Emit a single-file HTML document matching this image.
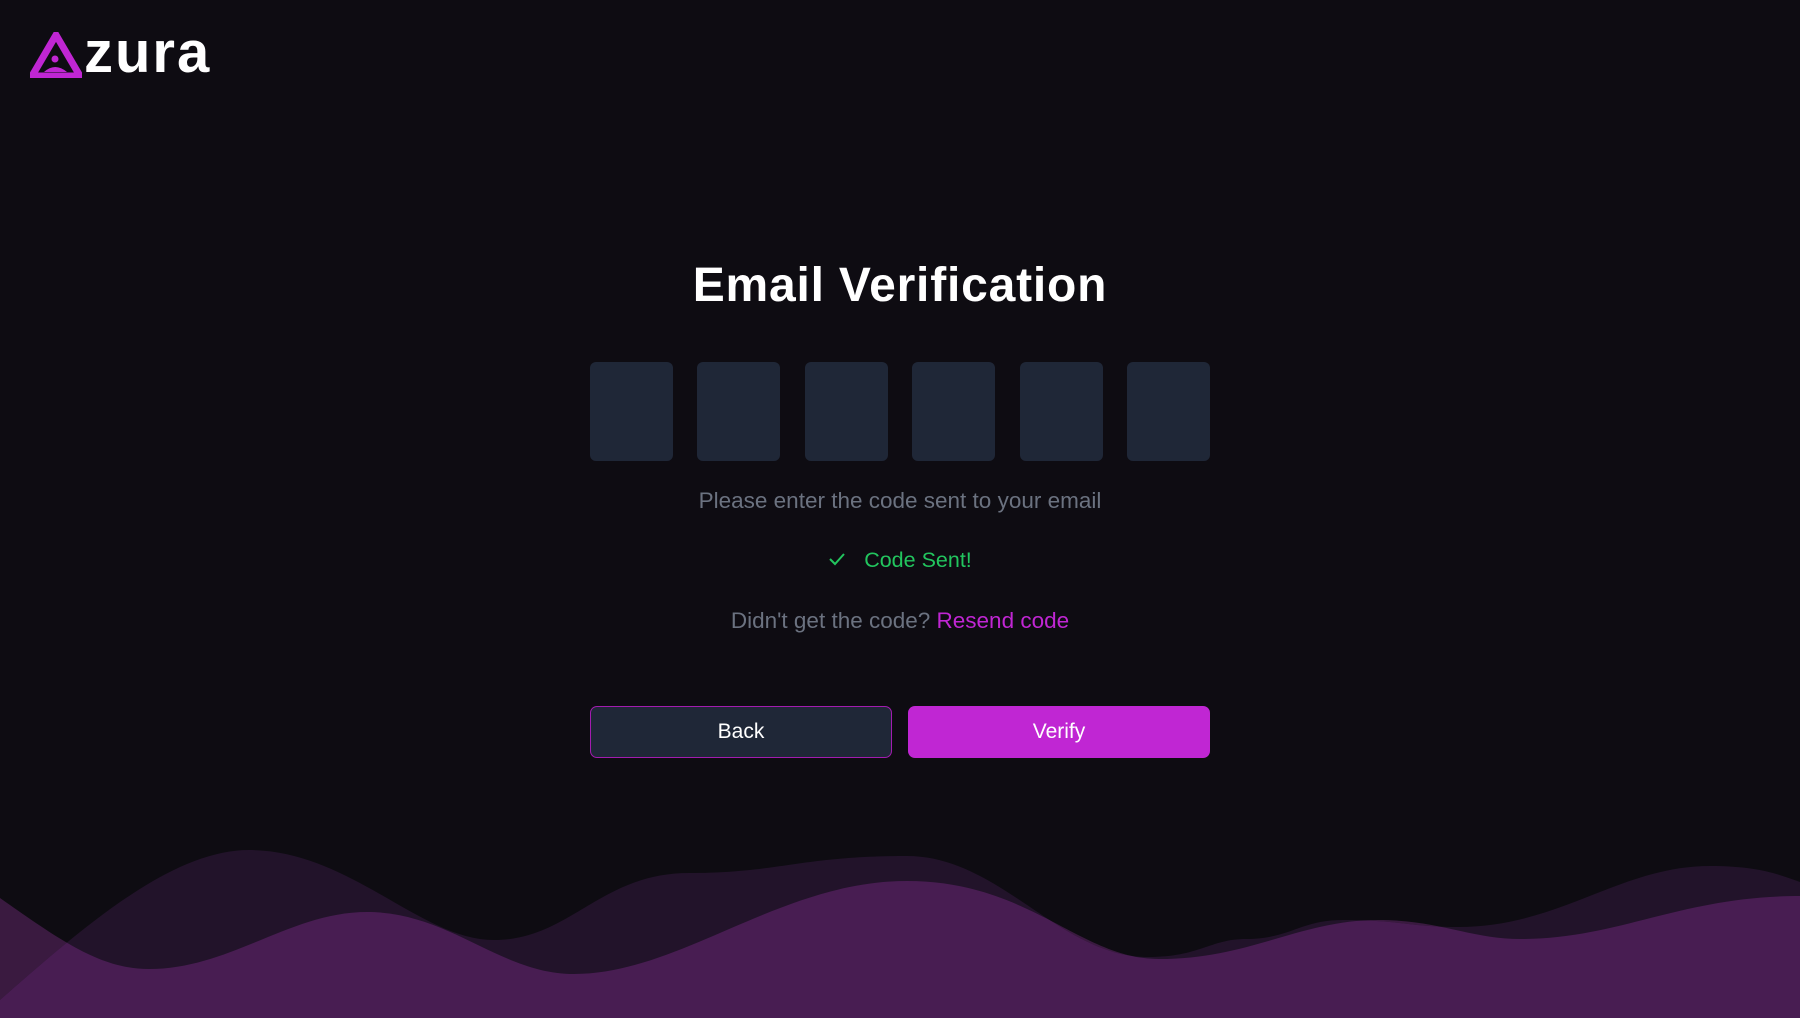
<!DOCTYPE html>
<html><head><meta charset="utf-8"><style>
*{margin:0;padding:0;box-sizing:border-box}
body{width:1800px;height:1018px;background:#0e0c12;position:relative;overflow:hidden;font-family:"Liberation Sans",sans-serif}
.logo{position:absolute;left:30px;top:28px;display:flex;align-items:flex-end}
.logo span{font-size:58px;font-weight:bold;color:#fff;letter-spacing:2px;line-height:50px;margin-left:2px}
h1{position:absolute;top:258px;left:0;width:1800px;text-align:center;color:#fff;font-size:48px;font-weight:bold;letter-spacing:0.8px}
.boxes{position:absolute;left:590px;top:362px;display:flex;gap:24.4px}
.boxes div{width:83px;height:99px;background:#1f2737;border-radius:6px}
.t{position:absolute;left:0;width:1800px;text-align:center;font-size:22.5px;color:#6b7280}
.btn{position:absolute;top:706px;height:52px;width:302px;border-radius:7px;color:#fff;font-size:21px;display:flex;align-items:center;justify-content:center}
svg.w{position:absolute;left:0;top:0}
</style></head><body>
<div class="logo">
<svg width="52" height="46" viewBox="0 0 52 46"><path d="M26 3 L50 44 L2 44 Z" fill="none" stroke="#c026d3" stroke-width="7" stroke-linejoin="miter"/><circle cx="25" cy="27" r="3.5" fill="#c026d3"/><path d="M14 40 Q25 30 37 40 Z" fill="#c026d3"/></svg>
<span>zura</span></div>
<h1>Email Verification</h1>
<div class="boxes"><div></div><div></div><div></div><div></div><div></div><div></div></div>
<div class="t" style="top:488px">Please enter the code sent to your email</div>
<div class="t" style="top:548px;color:#22c55e;font-size:21.5px"><svg width="18" height="14" viewBox="0 0 18 14" style="margin-right:18px;vertical-align:1px"><path d="M2 7 L7 12 L16 2" fill="none" stroke="#22c55e" stroke-width="2"/></svg>Code Sent!</div>
<div class="t" style="top:608px">Didn't get the code? <span style="color:#c026d3">Resend code</span></div>
<div class="btn" style="left:590px;background:#1f2737;border:1.5px solid #a21caf">Back</div>
<div class="btn" style="left:908px;background:#c026d3">Verify</div>
<svg class="w" width="1800" height="1018">
<defs>
<clipPath id="bk"><path id="bp" d="M0,1000 C80,930 170,850 249,850 C350,850 420,940 494,940 C570,940 600,873 689,873 C780,873 800,856 907,856 C1000,856 1060,957 1148,957 C1200,957 1210,939 1246,939 C1290,939 1300,920 1343,920 C1400,920 1410,927 1458,927 C1560,927 1620,866 1710,866 C1760,866 1780,875 1800,882 L1800,1018 L0,1018Z"/></clipPath>
</defs>
<path d="M0,898 C60,940 100,969 149,969 C230,969 290,912 367,912 C450,912 500,974 574,974 C680,974 780,881 907,881 C1030,881 1080,959 1159,959 C1250,959 1300,920 1378,920 C1440,920 1470,939 1521,939 C1620,939 1680,896 1800,896 L1800,1018 L0,1018Z" fill="#3a1a40"/>
<use href="#bp" fill="#22132a"/>
<path clip-path="url(#bk)" d="M0,898 C60,940 100,969 149,969 C230,969 290,912 367,912 C450,912 500,974 574,974 C680,974 780,881 907,881 C1030,881 1080,959 1159,959 C1250,959 1300,920 1378,920 C1440,920 1470,939 1521,939 C1620,939 1680,896 1800,896 L1800,1018 L0,1018Z" fill="#481d52"/>
</svg>
</body></html>
